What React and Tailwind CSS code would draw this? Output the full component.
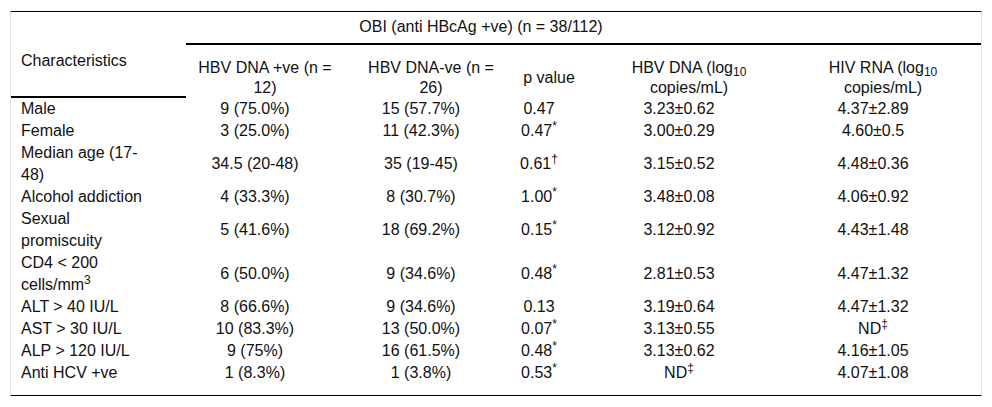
import React from 'react'

const S = ({ children }) => <sup>{children}</sup>
const Log = () => (
  <>
    log<sub>10</sub>
  </>
)

const rows = [
  ['Male', '9 (75.0%)', '15 (57.7%)', '0.47', '3.23±0.62', '4.37±2.89'],
  ['Female', '3 (25.0%)', '11 (42.3%)', <>0.47<S>*</S></>, '3.00±0.29', '4.60±0.5'],
  ['Median age (17-48)', '34.5 (20-48)', '35 (19-45)', <>0.61<S>†</S></>, '3.15±0.52', '4.48±0.36'],
  ['Alcohol addiction', '4 (33.3%)', '8 (30.7%)', <>1.00<S>*</S></>, '3.48±0.08', '4.06±0.92'],
  ['Sexual promiscuity', '5 (41.6%)', '18 (69.2%)', <>0.15<S>*</S></>, '3.12±0.92', '4.43±1.48'],
  [<>CD4 &lt; 200 cells/mm<S>3</S></>, '6 (50.0%)', '9 (34.6%)', <>0.48<S>*</S></>, '2.81±0.53', '4.47±1.32'],
  ['ALT > 40 IU/L', '8 (66.6%)', '9 (34.6%)', '0.13', '3.19±0.64', '4.47±1.32'],
  ['AST > 30 IU/L', '10 (83.3%)', '13 (50.0%)', <>0.07<S>*</S></>, '3.13±0.55', <>ND<S>‡</S></>],
  ['ALP > 120 IU/L', '9 (75%)', '16 (61.5%)', <>0.48<S>*</S></>, '3.13±0.62', '4.16±1.05'],
  ['Anti HCV +ve', '1 (8.3%)', '1 (3.8%)', <>0.53<S>*</S></>, <>ND<S>‡</S></>, '4.07±1.08'],
]

export default function App() {
  return (
    <div className="min-h-screen bg-white pt-[11px] pl-[10px] font-['Liberation_Sans',Arial,sans-serif] text-[16px] text-[#111]">
      <div className="w-[972px] border-t border-b border-x border-t-black border-b-black border-x-[#e2e2e2] pb-[11px]">
        <table className="w-[970px] table-fixed border-separate border-spacing-0">
          <colgroup>
            <col className="w-[175px]" />
            <col className="w-[171px]" />
            <col className="w-[161px]" />
            <col className="w-[75px]" />
            <col className="w-[205px]" />
            <col className="w-[183px]" />
          </colgroup>
          <thead>
            <tr>
              <th
                rowSpan={2}
                className="border-b-2 border-black pl-[10px] pt-[38px] text-left align-top font-normal leading-[22px]"
              >
                Characteristics
              </th>
              <th
                colSpan={4}
                className="border-b-2 border-black pt-[4px] pb-[5px] pr-[22px] text-center font-normal leading-[22px]"
              >
                OBI (anti HBcAg +ve) (n = 38/112)
              </th>
              <th className="border-b-2 border-black" />
            </tr>
            <tr>
              <th className="pt-[13px] pr-[13px] text-center align-top font-normal leading-[20px]">
                HBV DNA +ve (n = 12)
              </th>
              <th className="pt-[13px] pr-[13px] text-center align-top font-normal leading-[20px]">
                HBV DNA-ve (n = 26)
              </th>
              <th className="pt-[13px] pr-[13px] text-center align-middle font-normal leading-[20px]">
                p value
              </th>
              <th className="pt-[13px] pr-[13px] text-center align-top font-normal leading-[20px]">
                HBV DNA (<Log /> copies/mL)
              </th>
              <th className="pt-[13px] pr-[13px] text-center align-top font-normal leading-[20px]">
                HIV RNA (<Log /> copies/mL)
              </th>
            </tr>
          </thead>
          <tbody>
            {rows.map((r, i) => (
              <tr key={i} className="leading-[22px]">
                <td className="pl-[10px] pr-[36px] text-left align-middle">{r[0]}</td>
                {r.slice(1).map((c, j) => (
                  <td key={j} className="pr-[33px] text-center align-middle">
                    {c}
                  </td>
                ))}
              </tr>
            ))}
          </tbody>
        </table>
      </div>
    </div>
  )
}
